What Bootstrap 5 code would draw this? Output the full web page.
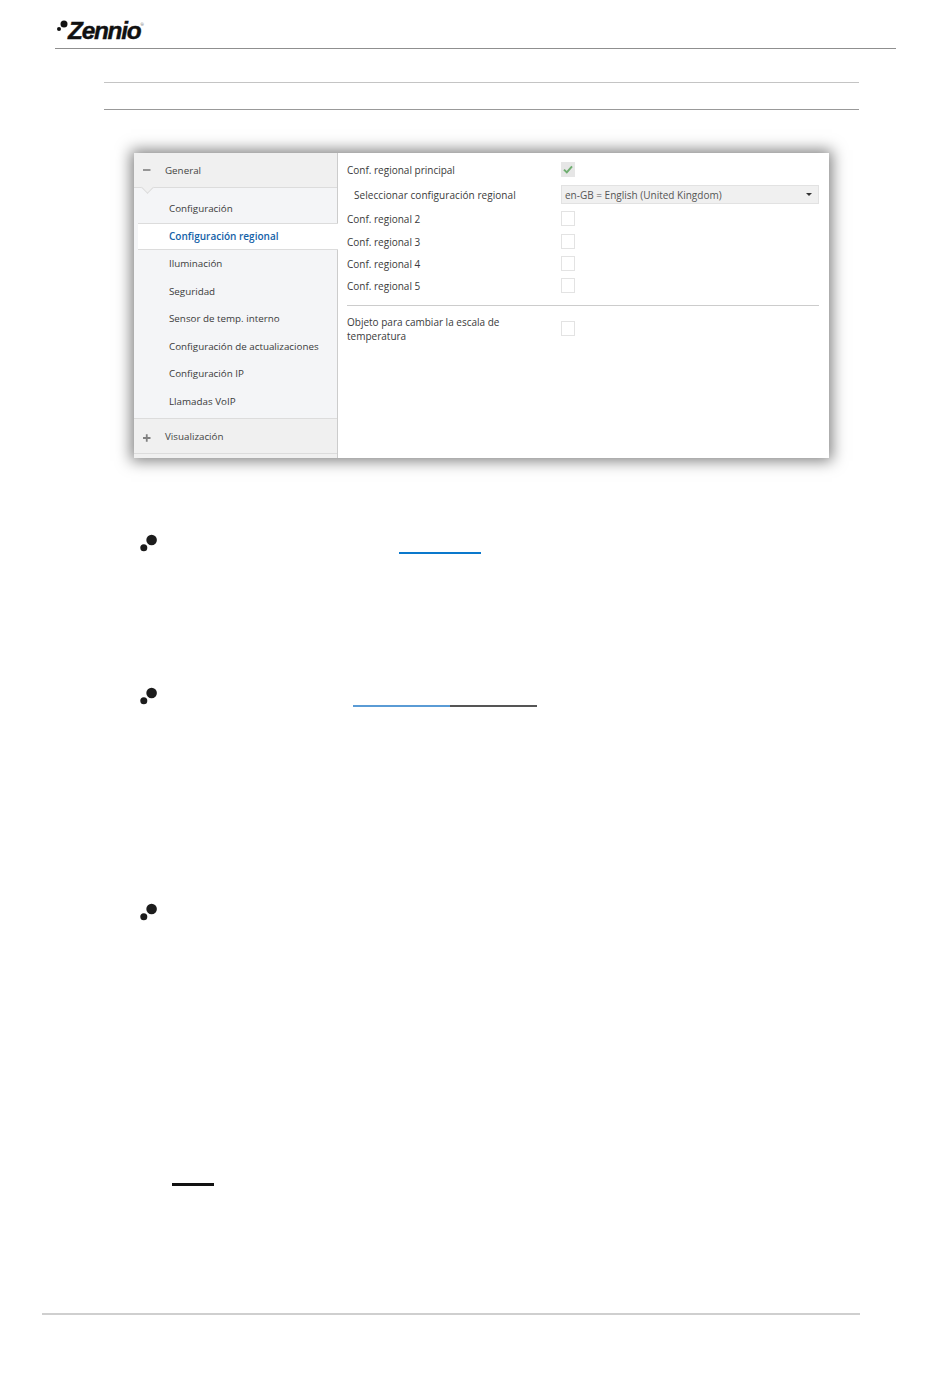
<!DOCTYPE html>
<html lang="es">
<head>
<meta charset="utf-8">
<title>Zennio</title>
<link href="https://cdn.jsdelivr.net/npm/bootstrap@5.3.0/dist/css/bootstrap.min.css" rel="stylesheet">
<style>
html,body{background:#fff;margin:0;padding:0}
.sheet{width:950px;height:1379px;overflow:hidden;font-family:"Open Sans","Liberation Sans",sans-serif;color:#333}
.head-bar{margin-left:55px;width:841px;height:49px;border-bottom:1px solid #8f8f8f;padding-left:2px}
.logo-dots{width:11px;height:15px;margin-top:17px;flex:none}
.logo-word{font-family:"Liberation Sans",sans-serif;font-weight:700;font-style:italic;font-size:24.4px;line-height:29px;letter-spacing:-1.25px;color:#111;margin-top:16px;-webkit-text-stroke:.4px #111}
.logo-reg{font-size:4px;line-height:4px;margin-top:23px;margin-left:0;color:#555}
.rule-a{margin:33px 0 0 104px;width:755px;height:1px;background:#c4c4c4}
.rule-b{margin:26px 0 0 104px;width:755px;height:1px;background:#999}
.dlg{margin:43px 0 0 134px;width:695px;height:305px;background:#fff;box-shadow:0 0 14px 3px rgba(0,0,0,.5);font-size:10px;color:#3a3a3a;overflow:hidden}
.side{width:204px;flex:none;background:#f4f5f7;border-right:1px solid #ccc;font-size:9.8px}
.grp{height:35px;background:#f0f0f0;border-bottom:1px solid #dcdcdc;color:#444;position:relative;padding-top:3px}
.grp-two{height:36px;border-top:1px solid #dcdcdc}
.grp-sign{width:31px;padding-left:9px;flex:none;display:flex;align-items:center}
.grp-sign-up{margin-top:-3px}
.notch{position:absolute;left:9px;bottom:-5px;width:9px;height:9px;background:#f0f0f0;border-right:1px solid #dcdcdc;border-bottom:1px solid #dcdcdc;transform:rotate(45deg)}
.items{padding-top:7px;height:230px}
.entry{height:27.55px;padding-left:35px;white-space:nowrap;line-height:1}
.entry-on{margin-left:4px;margin-right:-1px;padding-left:31px;background:#fff;border-top:1px solid #dcdcdc;border-bottom:1px solid #dcdcdc;color:#1462a8;font-weight:600;font-size:10px;position:relative}
.end-strip{height:4px;background:#f0f0f0}
.pane{padding:6px 10px 0 9px;flex:1 1 auto;min-width:0}
.prow{height:22px;line-height:1}
.gap-top-3{margin-top:3px}
.gap-top-2{margin-top:2px}
.gap-top-1{margin-top:1px}
.plabel{width:214px;flex:none}
.plabel-in{padding-left:7px;letter-spacing:.06px}
.tick{width:14px;height:15px;border:1px solid #e3e3e3;background:#fff;flex:none;margin-top:-2px}
.tick-on{background:#e6e6e6;border-color:#e6e6e6}
.pick{flex:1 1 auto;height:19px;background:#f0f0f0;border:1px solid #e2e2e2;padding:1px 6px 0 3px;color:#555;margin-top:-2px}
.caret-mark{width:0;height:0;border-left:3.5px solid transparent;border-right:3.5px solid transparent;border-top:3.5px solid #333}
.sep{height:1px;background:#ccc;margin:8px 0 9px}
.prow-tall{height:28px;line-height:14px}
.pip{display:block;width:20px;height:20px;flex:none}
.pip-1{margin:74px 0 0 139px}
.line-1{margin:0 0 0 399px;width:82px;height:2px;background:#0a78cc}
.pip-2{margin:131px 0 0 139px}
.line-2{margin:0 0 0 353px;width:184px;height:2px;background:linear-gradient(90deg,#5a9bd5 0,#5a9bd5 97px,#555 97px,#555 100%)}
.pip-3{margin:194px 0 0 139px}
.line-3{margin:262px 0 0 172px;width:42px;height:3px;background:#111}
.foot-rule{margin:127px 0 0 42px;width:818px;height:2px;background:#cfcfcf}
</style>
</head>
<body>
<div class="sheet">
  <div class="head-bar d-flex align-items-start">
    <svg class="logo-dots" viewBox="0 0 11 15" aria-hidden="true"><circle cx="7" cy="7" r="3.5" fill="#111"/><circle cx="2" cy="12" r="2" fill="#111"/></svg>
    <span class="logo-word">Zennio</span><span class="logo-reg">®</span>
  </div>
  <div class="rule-a"></div>
  <div class="rule-b"></div>

  <div class="dlg d-flex">
    <div class="side">
      <div class="grp d-flex align-items-center"><span class="grp-sign grp-sign-up"><svg width="8" height="8" viewBox="0 0 8 8" aria-hidden="true"><path d="M0 4H7.5" stroke="#808080" stroke-width="1.6"/></svg></span><span>General</span><span class="notch"></span></div>
      <div class="items">
        <div class="entry d-flex align-items-center">Configuración</div>
        <div class="entry entry-on d-flex align-items-center">Configuración regional</div>
        <div class="entry d-flex align-items-center">Iluminación</div>
        <div class="entry d-flex align-items-center">Seguridad</div>
        <div class="entry d-flex align-items-center">Sensor de temp. interno</div>
        <div class="entry d-flex align-items-center">Configuración de actualizaciones</div>
        <div class="entry d-flex align-items-center">Configuración IP</div>
        <div class="entry d-flex align-items-center">Llamadas VoIP</div>
      </div>
      <div class="grp grp-two d-flex align-items-center"><span class="grp-sign"><svg width="8" height="8" viewBox="0 0 8 8" aria-hidden="true"><path d="M0 4H7.5M3.75 .2V7.8" stroke="#808080" stroke-width="1.8"/></svg></span><span>Visualización</span></div>
      <div class="end-strip"></div>
    </div>
    <div class="pane">
      <div class="prow d-flex align-items-center"><span class="plabel">Conf. regional principal</span>
        <span class="tick tick-on d-flex align-items-center justify-content-center"><svg width="10" height="9" viewBox="0 0 10 9" aria-hidden="true"><path d="M1 4.6 3.8 7.4 9 1.4" fill="none" stroke="#6fae70" stroke-width="2"/></svg></span></div>
      <div class="prow d-flex align-items-center gap-top-3"><span class="plabel plabel-in">Seleccionar configuración regional</span>
        <span class="pick d-flex align-items-center justify-content-between"><span>en-GB = English (United Kingdom)</span><span class="caret-mark"></span></span></div>
      <div class="prow d-flex align-items-center gap-top-2"><span class="plabel">Conf. regional 2</span><span class="tick"></span></div>
      <div class="prow d-flex align-items-center gap-top-1"><span class="plabel">Conf. regional 3</span><span class="tick"></span></div>
      <div class="prow d-flex align-items-center"><span class="plabel">Conf. regional 4</span><span class="tick"></span></div>
      <div class="prow d-flex align-items-center"><span class="plabel">Conf. regional 5</span><span class="tick"></span></div>
      <div class="sep"></div>
      <div class="prow-tall d-flex align-items-center"><span class="plabel">Objeto para cambiar la escala de<br>temperatura</span><span class="tick"></span></div>
    </div>
  </div>

  <svg class="pip pip-1" viewBox="0 0 20 20" aria-hidden="true"><circle cx="12.6" cy="8" r="5.3" fill="#1c1c1c"/><circle cx="4.8" cy="15.7" r="3.5" fill="#1c1c1c"/></svg>
  <div class="line-1"></div>
  <svg class="pip pip-2" viewBox="0 0 20 20" aria-hidden="true"><circle cx="12.6" cy="8" r="5.3" fill="#1c1c1c"/><circle cx="4.8" cy="15.7" r="3.5" fill="#1c1c1c"/></svg>
  <div class="line-2"></div>
  <svg class="pip pip-3" viewBox="0 0 20 20" aria-hidden="true"><circle cx="12.6" cy="8" r="5.3" fill="#1c1c1c"/><circle cx="4.8" cy="15.7" r="3.5" fill="#1c1c1c"/></svg>
  <div class="line-3"></div>
  <div class="foot-rule"></div>
</div>
<script src="https://cdn.jsdelivr.net/npm/bootstrap@5.3.0/dist/js/bootstrap.bundle.min.js"></script>
</body>
</html>
